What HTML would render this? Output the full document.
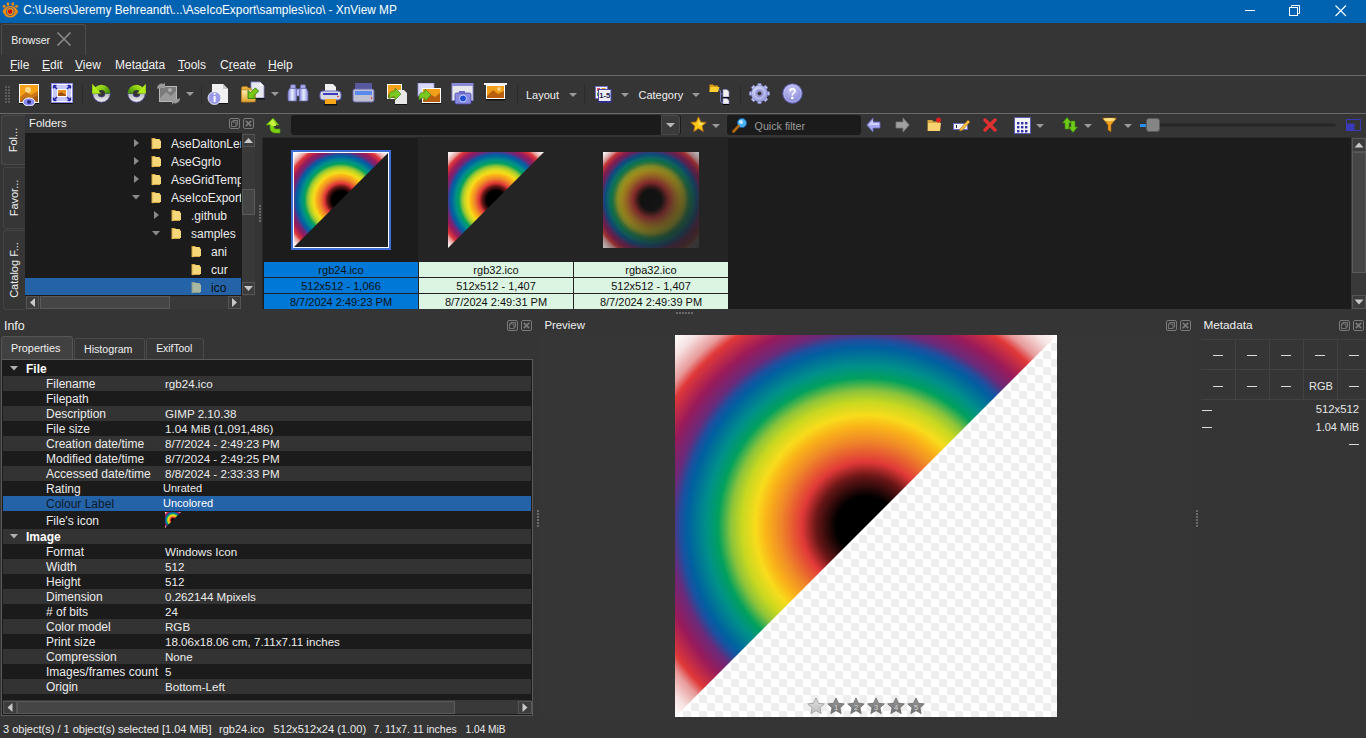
<!DOCTYPE html><html><head><meta charset="utf-8"><style>
html,body{margin:0;padding:0;}
body{width:1366px;height:738px;background:#353535;position:relative;overflow:hidden;font-family:"Liberation Sans",sans-serif;}
.a{position:absolute;}
.t{position:absolute;white-space:nowrap;}
</style></head><body>

<div class="a" style="left:0px;top:0px;width:1366px;height:23px;background:#0063b1;"></div>
<div class="t" style="left:23.2px;top:5.47px;font-size:11.85px;line-height:11.85px;color:#ffffff;">C:\Users\Jeremy Behreandt\...\AseIcoExport\samples\ico\ - XnView MP</div>
<svg class="a" style="left:2px;top:2px;" width="18" height="17" viewBox="0 0 18 17"><g fill="#f58a10"><ellipse cx="2.2" cy="4.3" rx="1.6" ry="1.4"/><ellipse cx="6" cy="2" rx="1.4" ry="1.8"/><ellipse cx="10.8" cy="2" rx="1.4" ry="1.8"/><ellipse cx="14.5" cy="4.3" rx="1.6" ry="1.4"/><path d="M0.5 9.5Q3 4 8.3 4Q13.6 4 16.2 9.5Q13.6 15.5 8.3 15.5Q3 15.5 0.5 9.5Z"/></g><circle cx="8.3" cy="9.5" r="4.3" fill="#1a5a9a"/><circle cx="8.3" cy="9.5" r="3.4" fill="#f59a18"/><circle cx="8.1" cy="9.6" r="2.3" fill="#c81408"/></svg>
<div class="a" style="left:1245px;top:10px;width:10px;height:1px;background:#ffffff;"></div>
<svg class="a" style="left:1289px;top:5px;" width="12" height="12" viewBox="0 0 12 12"><rect x="0.5" y="2.5" width="8" height="8" fill="none" stroke="#fff"/><path d="M2.5 2.5V0.5h8v8h-2" fill="none" stroke="#fff"/></svg>
<svg class="a" style="left:1335px;top:5px;" width="12" height="12" viewBox="0 0 12 12"><path d="M0.5 0.5L11 11M11 0.5L0.5 11" stroke="#fff" stroke-width="1.1"/></svg>
<div class="a" style="left:1px;top:24px;width:83px;height:30px;border:1px solid #4c4c4c;border-bottom:none;border-radius:3px 3px 0 0;background:#363636"></div>
<div class="t" style="left:11.3px;top:34.83px;font-size:10.6px;line-height:10.6px;color:#f0f0f0;">Browser</div>
<svg class="a" style="left:56px;top:31px;" width="16" height="16" viewBox="0 0 16 16"><path d="M1.5 1.5L14.5 14.5M14.5 1.5L1.5 14.5" stroke="#8a8a8a" stroke-width="1.6"/></svg>
<div class="t" style="left:10px;top:58.54px;font-size:12px;line-height:12px;color:#f0f0f0;text-decoration-color:#f0f0f0;"><u>F</u>ile</div>
<div class="t" style="left:42px;top:58.54px;font-size:12px;line-height:12px;color:#f0f0f0;text-decoration-color:#f0f0f0;"><u>E</u>dit</div>
<div class="t" style="left:75px;top:58.54px;font-size:12px;line-height:12px;color:#f0f0f0;text-decoration-color:#f0f0f0;"><u>V</u>iew</div>
<div class="t" style="left:115px;top:58.54px;font-size:12px;line-height:12px;color:#f0f0f0;text-decoration-color:#f0f0f0;">Meta<u>d</u>ata</div>
<div class="t" style="left:178px;top:58.54px;font-size:12px;line-height:12px;color:#f0f0f0;text-decoration-color:#f0f0f0;"><u>T</u>ools</div>
<div class="t" style="left:220px;top:58.54px;font-size:12px;line-height:12px;color:#f0f0f0;text-decoration-color:#f0f0f0;">C<u>r</u>eate</div>
<div class="t" style="left:268px;top:58.54px;font-size:12px;line-height:12px;color:#f0f0f0;text-decoration-color:#f0f0f0;"><u>H</u>elp</div>
<div class="a" style="left:0px;top:75px;width:1366px;height:1px;background:#6a6a6a;"></div>
<svg class="a" style="left:5px;top:86px;" width="6" height="18" viewBox="0 0 6 18"><rect x="0" y="0" width="2" height="2" fill="#5a5a5a"/><rect x="3" y="0" width="2" height="2" fill="#5a5a5a"/><rect x="0" y="3" width="2" height="2" fill="#5a5a5a"/><rect x="3" y="3" width="2" height="2" fill="#5a5a5a"/><rect x="0" y="6" width="2" height="2" fill="#5a5a5a"/><rect x="3" y="6" width="2" height="2" fill="#5a5a5a"/><rect x="0" y="9" width="2" height="2" fill="#5a5a5a"/><rect x="3" y="9" width="2" height="2" fill="#5a5a5a"/><rect x="0" y="12" width="2" height="2" fill="#5a5a5a"/><rect x="3" y="12" width="2" height="2" fill="#5a5a5a"/><rect x="0" y="15" width="2" height="2" fill="#5a5a5a"/><rect x="3" y="15" width="2" height="2" fill="#5a5a5a"/></svg>
<svg class="a" style="left:18px;top:83px;" width="22" height="23" viewBox="0 0 22 23"><rect x="1" y="1" width="20" height="19" fill="#fff"/><rect x="2" y="2" width="18" height="17" fill="#f5a21a"/><circle cx="10" cy="7" r="3" fill="#fcd88a"/><path d="M2 14L8 9L13 12L20 8V19H2Z" fill="#c8761a"/><path d="M2 19L7 14L12 17L20 12V19Z" fill="#a25a12"/><rect x="1" y="20" width="20" height="1" fill="#111"/><ellipse cx="11" cy="19" rx="6" ry="4" fill="#8c8cf0" stroke="#fff" stroke-width="1"/><circle cx="11" cy="19" r="2" fill="#2a2a80"/></svg>
<svg class="a" style="left:51px;top:83px;" width="22" height="21" viewBox="0 0 22 21"><rect x="0.5" y="0.5" width="21" height="19" fill="#fff" stroke="#8a8ae0"/><rect x="2" y="2" width="18" height="16" fill="#c8c8f8"/><rect x="6" y="6" width="10" height="8" fill="#fff"/><rect x="7" y="7" width="8" height="6" fill="#e89020"/><path d="M7 11L10 9L15 12V13H7Z" fill="#a05010"/><path d="M2.5 2.5L6 6M2.5 2.5H5.5M2.5 2.5V5.5M19.5 2.5L16 6M19.5 2.5H16.5M19.5 2.5V5.5M2.5 17.5L6 14M2.5 17.5H5.5M2.5 17.5V14.5M19.5 17.5L16 14M19.5 17.5H16.5M19.5 17.5V14.5" stroke="#2626a8" stroke-width="1.5" fill="none"/><rect x="0" y="20" width="22" height="1" fill="#111"/></svg>
<div class="a" style="left:82px;top:85px;width:1px;height:19px;background:#2b2b2b;"></div>
<svg class="a" style="left:91px;top:83px;" width="21" height="21" viewBox="0 0 21 21"><defs><linearGradient id="rl" x1="0" y1="0" x2="1" y2="0.6"><stop offset="0" stop-color="#c8f030"/><stop offset="0.55" stop-color="#8ad010"/><stop offset="1" stop-color="#4a9808"/></linearGradient><linearGradient id="rlb" x1="0" y1="0" x2="0" y2="1"><stop offset="0" stop-color="#b8b8b8"/><stop offset="1" stop-color="#f0f0f0"/></linearGradient></defs><path d="M1.7 10.5A8.8 8.8 0 0 0 19.3 10.5H14A3.5 3.5 0 0 1 7 10.5Z" fill="url(#rlb)" stroke="#40409a" stroke-width="0.8"/><path d="M1.7 10.5A8.8 8.8 0 0 1 19.3 10.5H14A3.5 3.5 0 0 0 7 10.5Z" fill="url(#rl)"/><path d="M1.2 0.8V10.5H10Z" fill="#b0ec18"/></svg>
<svg class="a" style="left:126px;top:83px;" width="21" height="21" viewBox="0 0 21 21"><g transform="translate(21,0) scale(-1,1)"><defs><linearGradient id="rr" x1="0" y1="0" x2="1" y2="0.6"><stop offset="0" stop-color="#c8f030"/><stop offset="0.55" stop-color="#8ad010"/><stop offset="1" stop-color="#4a9808"/></linearGradient><linearGradient id="rrb" x1="0" y1="0" x2="0" y2="1"><stop offset="0" stop-color="#b8b8b8"/><stop offset="1" stop-color="#f0f0f0"/></linearGradient></defs><path d="M1.7 10.5A8.8 8.8 0 0 0 19.3 10.5H14A3.5 3.5 0 0 1 7 10.5Z" fill="url(#rrb)" stroke="#40409a" stroke-width="0.8"/><path d="M1.7 10.5A8.8 8.8 0 0 1 19.3 10.5H14A3.5 3.5 0 0 0 7 10.5Z" fill="url(#rr)"/><path d="M1.2 0.8V10.5H10Z" fill="#b0ec18"/></g></svg>
<svg class="a" style="left:156px;top:82px;" width="25" height="23" viewBox="0 0 25 23"><rect x="3.5" y="4.5" width="17" height="15" fill="#7a7a7a" stroke="#b8b8b8"/><path d="M4 16L10 10L15 14L20 9V19H4Z" fill="#9a9a9a"/><circle cx="14" cy="8" r="2" fill="#aaa"/><path d="M1 7A5 5 0 0 1 8 2L9 0V6H3Z" fill="#9a9a9a"/><path d="M24 16A5 5 0 0 1 17 21L16 23V17H22Z" fill="#9a9a9a"/></svg>
<svg class="a" style="left:186px;top:92px;" width="8" height="4" viewBox="0 0 8 4"><path d="M0 0H8L4 4Z" fill="#9a9a9a"/></svg>
<div class="a" style="left:201px;top:85px;width:1px;height:19px;background:#2b2b2b;"></div>
<svg class="a" style="left:207px;top:83px;" width="22" height="22" viewBox="0 0 22 22"><path d="M5 1H16L21 6V20H5Z" fill="#f0f0f0"/><path d="M16 1V6H21Z" fill="#c8c8c8"/><rect x="5" y="20" width="16" height="1" fill="#111"/><circle cx="7.5" cy="15" r="6.5" fill="#9a9ae8" stroke="#fff" stroke-width="0.8"/><rect x="6.6" y="13" width="2" height="6" fill="#fff"/><circle cx="7.6" cy="10.8" r="1.1" fill="#fff"/></svg>
<svg class="a" style="left:240px;top:81px;" width="25" height="23" viewBox="0 0 25 23"><defs><linearGradient id="fd" x1="0" y1="0" x2="0" y2="1"><stop offset="0" stop-color="#fff0b0"/><stop offset="1" stop-color="#e0a030"/></linearGradient></defs><path d="M11 1H20L24 5V17H11Z" fill="#e6e8ee" stroke="#8888d8" stroke-width="0.8"/><path d="M20 1V5H24Z" fill="#fff"/><rect x="12" y="17" width="13" height="1.4" fill="#111"/><path d="M1.5 7Q1.5 5.5 3 5.5H7L8.5 7H11V21H1.5Z" fill="#e8b040" stroke="#b07818" stroke-width="0.6"/><path d="M2.5 9H15.5V19.5Q15.5 21 14 21H3Q1.5 21 1.5 19.5V10Q1.5 9 2.5 9Z" fill="url(#fd)" stroke="#b07818" stroke-width="0.6"/><path d="M8 9.5V17.5H16L13.6 15.1L18.6 10.1L15.4 6.9L10.4 11.9Z" fill="#78c818" stroke="#1e6e08" stroke-width="0.8"/></svg>
<svg class="a" style="left:271px;top:92px;" width="8" height="4" viewBox="0 0 8 4"><path d="M0 0H8L4 4Z" fill="#9a9a9a"/></svg>
<svg class="a" style="left:287px;top:84px;" width="22" height="18" viewBox="0 0 22 18"><defs><linearGradient id="bn" x1="0" y1="0" x2="1" y2="0"><stop offset="0" stop-color="#8888d8"/><stop offset="0.5" stop-color="#e6f0ff"/><stop offset="1" stop-color="#8888d8"/></linearGradient></defs><g stroke="#6a6ab8" stroke-width="0.7"><rect x="3.5" y="0.8" width="5" height="3.6" rx="1" fill="#a8a8e8"/><rect x="13.5" y="0.8" width="5" height="3.6" rx="1" fill="#a8a8e8"/><path d="M2.5 4.5H9.5V17H2Q1 17 1 15.5V8Z" fill="url(#bn)"/><path d="M12.5 4.5H19.5L21 8V15.5Q21 17 20 17H12.5Z" fill="url(#bn)"/><rect x="9.5" y="5" width="3" height="7" fill="#b8c0f0"/></g></svg>
<svg class="a" style="left:319px;top:83px;" width="23" height="23" viewBox="0 0 23 23"><path d="M6 1H14L17 4V9H6Z" fill="#f0f0f0"/><rect x="1" y="8" width="21" height="9" rx="3" fill="#d8d8e0" stroke="#6868c0" stroke-width="1"/><rect x="4" y="10" width="15" height="2" fill="#3c3cc0"/><circle cx="19" cy="13.5" r="0.8" fill="#e02020"/><rect x="6" y="16" width="11" height="5" fill="#f8a818"/><rect x="5" y="21" width="13" height="1.5" fill="#111"/></svg>
<svg class="a" style="left:352px;top:83px;" width="23" height="21" viewBox="0 0 23 21"><rect x="3" y="0" width="17" height="6" fill="#5858a0"/><rect x="1" y="6" width="21" height="13" rx="2" fill="#c0c0d0" stroke="#6868b0" stroke-width="1"/><rect x="3" y="8" width="17" height="4" fill="#5a8af0"/><circle cx="19.5" cy="15" r="0.8" fill="#e02020"/></svg>
<svg class="a" style="left:386px;top:83px;" width="23" height="22" viewBox="0 0 23 22"><rect x="1" y="1" width="15" height="15" fill="#fff"/><rect x="2" y="2" width="13" height="13" fill="#f5a21a"/><path d="M2 12L8 8L15 11V15H2Z" fill="#b86a12"/><path d="M9 7H18L21 10V21H9Z" fill="#e8e8e8"/><rect x="9" y="21" width="12" height="1" fill="#111"/><path d="M3 13Q3 8 9 8V5L15 11L9 17V14Q6 13 3 16Z" fill="#78c820" stroke="#3a7a10" stroke-width="0.6"/></svg>
<svg class="a" style="left:417px;top:83px;" width="25" height="21" viewBox="0 0 25 21"><rect x="1" y="0" width="16" height="13" fill="#d8d8f8" stroke="#9090e0" stroke-width="0.8"/><rect x="5" y="5" width="19" height="15" fill="#fff"/><rect x="6" y="6" width="17" height="13" fill="#f0a018"/><path d="M6 17L13 11L18 14L23 10V19H6Z" fill="#b86010"/><rect x="5" y="20" width="19" height="1" fill="#111"/><path d="M2 14Q2 9 8 9V6L14 12L8 18V15Q5 14 2 17Z" fill="#78c820" stroke="#3a7a10" stroke-width="0.6"/></svg>
<svg class="a" style="left:451px;top:83px;" width="23" height="23" viewBox="0 0 23 23"><rect x="1" y="0.5" width="21" height="17" fill="#e8e8ec" stroke="#8a8ad8" stroke-width="1"/><rect x="1" y="0" width="21" height="3" fill="#8a8ad8"/><rect x="4" y="10" width="16" height="11" rx="1.5" fill="#8a8ae0" stroke="#4848a8" stroke-width="0.8"/><rect x="8" y="8" width="6" height="3" fill="#6a6ac8"/><circle cx="12" cy="15.5" r="3.5" fill="#2050d0" stroke="#c8d0ff" stroke-width="1"/></svg>
<svg class="a" style="left:483px;top:83px;" width="25" height="19" viewBox="0 0 25 19"><rect x="1" y="0" width="23" height="2" fill="#f4f4f4"/><rect x="3" y="2" width="19" height="14" fill="#fff"/><rect x="4" y="3" width="17" height="12" fill="#f0a018"/><circle cx="16" cy="6" r="2" fill="#fcd080"/><path d="M4 13L10 7L15 11L21 8V15H4Z" fill="#b86010"/><rect x="3" y="16" width="19" height="1.5" fill="#111"/></svg>
<div class="a" style="left:517px;top:85px;width:1px;height:19px;background:#2b2b2b;"></div>
<div class="t" style="left:526px;top:89.89px;font-size:11px;line-height:11px;color:#f0f0f0;">Layout</div>
<svg class="a" style="left:569px;top:93px;" width="8" height="4" viewBox="0 0 8 4"><path d="M0 0H8L4 4Z" fill="#9a9a9a"/></svg>
<div class="a" style="left:584px;top:85px;width:1px;height:19px;background:#2b2b2b;"></div>
<svg class="a" style="left:594px;top:85px;" width="18" height="18" viewBox="0 0 18 18"><rect x="1.5" y="1.5" width="12" height="12" fill="#f4f4ff" stroke="#6a6ad0" stroke-width="0.8"/><rect x="3" y="3" width="3" height="3" fill="#e05050"/><rect x="7.5" y="3" width="4" height="1.8" fill="#f0a020"/><rect x="3" y="7.5" width="1.5" height="3.5" fill="#50a030"/><rect x="4.5" y="4.5" width="12.5" height="12.5" fill="#eeeef4" stroke="#4848b0" stroke-width="1"/><rect x="4" y="16" width="13.5" height="1.5" fill="#2a2a90"/><text x="10.8" y="13.1" font-size="7.6" font-family="Liberation Sans" font-weight="bold" text-anchor="middle" fill="#1a1a50">1-5</text></svg>
<svg class="a" style="left:621px;top:93px;" width="8" height="4" viewBox="0 0 8 4"><path d="M0 0H8L4 4Z" fill="#9a9a9a"/></svg>
<div class="t" style="left:638.5px;top:89.89px;font-size:11px;line-height:11px;color:#f0f0f0;">Category</div>
<svg class="a" style="left:692px;top:93px;" width="8" height="4" viewBox="0 0 8 4"><path d="M0 0H8L4 4Z" fill="#9a9a9a"/></svg>
<svg class="a" style="left:708px;top:82px;" width="23" height="23" viewBox="0 0 23 23"><path d="M1.5 2.5H5L6 3.5H10V10H1.5Z" fill="#d89a18"/><path d="M2.5 5H11.5L10 10H1.5Z" fill="#ffd030"/><path d="M10.5 7.5Q12.5 7.5 12.5 9.5V19Q12.5 20.5 14 20.5H15M12.5 11.5Q12.5 12 14 12H15" fill="none" stroke="#7a7ad0" stroke-width="0.9"/><path d="M15 7.5H19L21 9.5V15H15Z" fill="#f0f0f0" stroke="#8080d0" stroke-width="0.6"/><rect x="15" y="15" width="6" height="1.2" fill="#000"/><path d="M15 16.5H19L21 18.5V22H15Z" fill="#f0f0f0" stroke="#8080d0" stroke-width="0.6"/><rect x="15" y="22" width="6" height="1" fill="#000"/></svg>
<div class="a" style="left:740px;top:85px;width:1px;height:19px;background:#2b2b2b;"></div>
<svg class="a" style="left:749px;top:83px;" width="21" height="21" viewBox="0 0 21 21"><defs><radialGradient id="gg" cx="0.4" cy="0.35" r="0.7"><stop offset="0" stop-color="#e0e6ff"/><stop offset="1" stop-color="#9094d8"/></radialGradient></defs><rect x="8.7" y="0.4" width="3.6" height="4.5" rx="0.6" fill="#c4ccf4" stroke="#7a7ac8" stroke-width="0.6" transform="rotate(0 10.5 10.5)"/><rect x="8.7" y="0.4" width="3.6" height="4.5" rx="0.6" fill="#c4ccf4" stroke="#7a7ac8" stroke-width="0.6" transform="rotate(45 10.5 10.5)"/><rect x="8.7" y="0.4" width="3.6" height="4.5" rx="0.6" fill="#c4ccf4" stroke="#7a7ac8" stroke-width="0.6" transform="rotate(90 10.5 10.5)"/><rect x="8.7" y="0.4" width="3.6" height="4.5" rx="0.6" fill="#c4ccf4" stroke="#7a7ac8" stroke-width="0.6" transform="rotate(135 10.5 10.5)"/><rect x="8.7" y="0.4" width="3.6" height="4.5" rx="0.6" fill="#c4ccf4" stroke="#7a7ac8" stroke-width="0.6" transform="rotate(180 10.5 10.5)"/><rect x="8.7" y="0.4" width="3.6" height="4.5" rx="0.6" fill="#c4ccf4" stroke="#7a7ac8" stroke-width="0.6" transform="rotate(225 10.5 10.5)"/><rect x="8.7" y="0.4" width="3.6" height="4.5" rx="0.6" fill="#c4ccf4" stroke="#7a7ac8" stroke-width="0.6" transform="rotate(270 10.5 10.5)"/><rect x="8.7" y="0.4" width="3.6" height="4.5" rx="0.6" fill="#c4ccf4" stroke="#7a7ac8" stroke-width="0.6" transform="rotate(315 10.5 10.5)"/><circle cx="10.5" cy="10.5" r="8.2" fill="url(#gg)" stroke="#7a7ac8" stroke-width="0.6"/><circle cx="10.5" cy="10.5" r="4.8" fill="#9a9ad8" stroke="#c8ccf4" stroke-width="1"/><circle cx="10.5" cy="10.5" r="2" fill="#3a3a3a"/></svg>
<svg class="a" style="left:782px;top:83px;" width="21" height="21" viewBox="0 0 21 21"><defs><radialGradient id="hg" cx="0.45" cy="0.3" r="0.75"><stop offset="0" stop-color="#c8c8f8"/><stop offset="1" stop-color="#8080d0"/></radialGradient></defs><circle cx="10.5" cy="10.5" r="9.8" fill="url(#hg)" stroke="#5a5ab0" stroke-width="0.9"/><circle cx="10.5" cy="10.5" r="8.4" fill="none" stroke="#d8d8ff" stroke-width="0.6" opacity="0.7"/><path d="M7.3 8.2Q7.3 5 10.6 5Q13.8 5 13.8 8Q13.8 9.8 11.8 10.8Q11 11.3 11 12.6H9.6Q9.6 10.6 11 9.8Q12 9.2 12 8.1Q12 6.6 10.5 6.6Q9.1 6.6 9.1 8.2Z" fill="#fff"/><circle cx="10.3" cy="15" r="1.3" fill="#fff"/></svg>
<div class="a" style="left:0px;top:113px;width:1366px;height:1px;background:#6a6a6a;"></div>
<div class="a" style="left:1px;top:115px;width:23px;height:48px;border:1px solid #4a4a4a;border-right:none;border-radius:3px 0 0 3px;background:#3a3a3a"></div>
<div class="a" style="left:3px;top:167px;width:21px;height:60px;border:1px solid #444;border-right:none;border-radius:3px 0 0 3px;background:#363636"></div>
<div class="a" style="left:3px;top:230px;width:21px;height:78px;border:1px solid #444;border-right:none;border-radius:3px 0 0 3px;background:#363636"></div>
<div class="t" style="left:13px;top:140px;font-size:11px;line-height:11px;color:#f0f0f0;transform:translate(-50%,-50%) rotate(-90deg);">Fol...</div>
<div class="t" style="left:14px;top:197.5px;font-size:11px;line-height:11px;color:#f0f0f0;transform:translate(-50%,-50%) rotate(-90deg);">Favor...</div>
<div class="t" style="left:14px;top:269.5px;font-size:11px;line-height:11px;color:#f0f0f0;transform:translate(-50%,-50%) rotate(-90deg);">Catalog F...</div>
<div class="t" style="left:29px;top:118.03px;font-size:11.3px;line-height:11.3px;color:#f0f0f0;">Folders</div>
<svg class="a" style="left:229px;top:118px;" width="11" height="11" viewBox="0 0 11 11"><rect x="0.5" y="0.5" width="10" height="10" rx="1.5" fill="none" stroke="#7a7a7a"/><rect x="4" y="2.5" width="4.5" height="4.5" fill="none" stroke="#7a7a7a" stroke-width="0.9"/><rect x="2.5" y="4" width="4.5" height="4.5" fill="#353535" stroke="#7a7a7a" stroke-width="0.9"/></svg>
<svg class="a" style="left:243px;top:118px;" width="11" height="11" viewBox="0 0 11 11"><rect x="0.5" y="0.5" width="10" height="10" rx="1.5" fill="none" stroke="#7a7a7a"/><path d="M2.8 2.8L8.2 8.2M8.2 2.8L2.8 8.2" stroke="#7a7a7a" stroke-width="1.7"/></svg>
<div class="a" style="left:25px;top:133px;width:217px;height:163px;background:#1b1b1b;"></div>
<div class="a" style="left:25px;top:278px;width:216px;height:17px;background:#2563a8;"></div>
<svg class="a" style="left:134px;top:139px;" width="5" height="8" viewBox="0 0 5 8"><path d="M0 0L5 4L0 8Z" fill="#8a8a8a"/></svg>
<svg class="a" style="left:151px;top:137px;" width="11" height="13" viewBox="0 0 11 13"><path d="M0.5 1H4L5 2H9V12H0.5Z" fill="#d6a640"/><path d="M1.5 2H7.5L10 4V11H3L1.5 12.5Z" fill="#f5d77a"/></svg>
<div class="a" style="left:171px;top:135px;width:70px;height:16px;overflow:hidden;"><div class="t" style="left:0;top:2.84px;font-size:12px;line-height:12px;color:#ececec">AseDaltonLer</div></div>
<svg class="a" style="left:134px;top:157px;" width="5" height="8" viewBox="0 0 5 8"><path d="M0 0L5 4L0 8Z" fill="#8a8a8a"/></svg>
<svg class="a" style="left:151px;top:155px;" width="11" height="13" viewBox="0 0 11 13"><path d="M0.5 1H4L5 2H9V12H0.5Z" fill="#d6a640"/><path d="M1.5 2H7.5L10 4V11H3L1.5 12.5Z" fill="#f5d77a"/></svg>
<div class="a" style="left:171px;top:153px;width:70px;height:16px;overflow:hidden;"><div class="t" style="left:0;top:2.84px;font-size:12px;line-height:12px;color:#ececec">AseGgrlo</div></div>
<svg class="a" style="left:134px;top:175px;" width="5" height="8" viewBox="0 0 5 8"><path d="M0 0L5 4L0 8Z" fill="#8a8a8a"/></svg>
<svg class="a" style="left:151px;top:173px;" width="11" height="13" viewBox="0 0 11 13"><path d="M0.5 1H4L5 2H9V12H0.5Z" fill="#d6a640"/><path d="M1.5 2H7.5L10 4V11H3L1.5 12.5Z" fill="#f5d77a"/></svg>
<div class="a" style="left:171px;top:171px;width:70px;height:16px;overflow:hidden;"><div class="t" style="left:0;top:2.84px;font-size:12px;line-height:12px;color:#ececec">AseGridTemp</div></div>
<svg class="a" style="left:132px;top:195px;" width="8" height="5" viewBox="0 0 8 5"><path d="M0 0H8L4 4.5Z" fill="#8a8a8a"/></svg>
<svg class="a" style="left:151px;top:191px;" width="11" height="13" viewBox="0 0 11 13"><path d="M0.5 1H4L5 2H9V12H0.5Z" fill="#d6a640"/><path d="M1.5 2H7.5L10 4V11H3L1.5 12.5Z" fill="#f5d77a"/></svg>
<div class="a" style="left:171px;top:189px;width:70px;height:16px;overflow:hidden;"><div class="t" style="left:0;top:2.84px;font-size:12px;line-height:12px;color:#ececec">AseIcoExport</div></div>
<svg class="a" style="left:154px;top:211px;" width="5" height="8" viewBox="0 0 5 8"><path d="M0 0L5 4L0 8Z" fill="#8a8a8a"/></svg>
<svg class="a" style="left:171px;top:209px;" width="11" height="13" viewBox="0 0 11 13"><path d="M0.5 1H4L5 2H9V12H0.5Z" fill="#d6a640"/><path d="M1.5 2H7.5L10 4V11H3L1.5 12.5Z" fill="#f5d77a"/></svg>
<div class="a" style="left:191px;top:207px;width:50px;height:16px;overflow:hidden;"><div class="t" style="left:0;top:2.84px;font-size:12px;line-height:12px;color:#ececec">.github</div></div>
<svg class="a" style="left:152px;top:231px;" width="8" height="5" viewBox="0 0 8 5"><path d="M0 0H8L4 4.5Z" fill="#8a8a8a"/></svg>
<svg class="a" style="left:171px;top:227px;" width="11" height="13" viewBox="0 0 11 13"><path d="M0.5 1H4L5 2H9V12H0.5Z" fill="#d6a640"/><path d="M1.5 2H7.5L10 4V11H3L1.5 12.5Z" fill="#f5d77a"/></svg>
<div class="a" style="left:191px;top:225px;width:50px;height:16px;overflow:hidden;"><div class="t" style="left:0;top:2.84px;font-size:12px;line-height:12px;color:#ececec">samples</div></div>
<svg class="a" style="left:191px;top:245px;" width="11" height="13" viewBox="0 0 11 13"><path d="M0.5 1H4L5 2H9V12H0.5Z" fill="#d6a640"/><path d="M1.5 2H7.5L10 4V11H3L1.5 12.5Z" fill="#f5d77a"/></svg>
<div class="a" style="left:211px;top:243px;width:30px;height:16px;overflow:hidden;"><div class="t" style="left:0;top:2.84px;font-size:12px;line-height:12px;color:#ececec">ani</div></div>
<svg class="a" style="left:191px;top:263px;" width="11" height="13" viewBox="0 0 11 13"><path d="M0.5 1H4L5 2H9V12H0.5Z" fill="#d6a640"/><path d="M1.5 2H7.5L10 4V11H3L1.5 12.5Z" fill="#f5d77a"/></svg>
<div class="a" style="left:211px;top:261px;width:30px;height:16px;overflow:hidden;"><div class="t" style="left:0;top:2.84px;font-size:12px;line-height:12px;color:#ececec">cur</div></div>
<svg class="a" style="left:191px;top:281px;" width="11" height="13" viewBox="0 0 11 13"><path d="M0.5 1H4L5 2H9V12H0.5Z" fill="#8a9a88"/><path d="M1.5 2H7.5L10 4V11H3L1.5 12.5Z" fill="#a8b8a0"/></svg>
<div class="a" style="left:211px;top:279px;width:30px;height:16px;overflow:hidden;"><div class="t" style="left:0;top:2.84px;font-size:12px;line-height:12px;color:#0c0c0c">ico</div></div>
<div class="a" style="left:242px;top:133px;width:13px;height:163px;background:#393939;"></div>
<div class="a" style="left:242px;top:134px;width:11px;height:11px;border:1px solid #555;background:#3c3c3c"></div>
<svg class="a" style="left:244px;top:136px;" width="9" height="9" viewBox="0 0 9 9"><path d="M0.0 7.0H9.0L4.5 2.0Z" fill="#c8c8c8"/></svg>
<div class="a" style="left:242px;top:282px;width:11px;height:11px;border:1px solid #555;background:#3c3c3c"></div>
<svg class="a" style="left:244px;top:284px;" width="9" height="9" viewBox="0 0 9 9"><path d="M0.0 2.0H9.0L4.5 7.0Z" fill="#c8c8c8"/></svg>
<div class="a" style="left:242px;top:189px;width:11px;height:24px;border:1px solid #5a5a5a;background:#454545"></div>
<div class="a" style="left:25px;top:296px;width:217px;height:13px;background:#393939;"></div>
<div class="a" style="left:26px;top:296px;width:11px;height:11px;border:1px solid #555;background:#3c3c3c"></div>
<svg class="a" style="left:28px;top:298px;" width="9" height="9" viewBox="0 0 9 9"><path d="M7.0 0.0V9.0L2.0 4.5Z" fill="#c8c8c8"/></svg>
<div class="a" style="left:40px;top:296px;width:128px;height:11px;border:1px solid #5a5a5a;background:#454545"></div>
<div class="a" style="left:228px;top:296px;width:11px;height:11px;border:1px solid #555;background:#3c3c3c"></div>
<svg class="a" style="left:230px;top:298px;" width="9" height="9" viewBox="0 0 9 9"><path d="M2.0 0.0V9.0L7.0 4.5Z" fill="#c8c8c8"/></svg>
<div class="a" style="left:241px;top:296px;width:14px;height:13px;background:#353535;"></div>
<svg class="a" style="left:259px;top:205px;" width="2" height="18" viewBox="0 0 2 18"><rect x="0" y="0" width="2" height="2" fill="#6a6a6a"/><rect x="0" y="3" width="2" height="2" fill="#6a6a6a"/><rect x="0" y="6" width="2" height="2" fill="#6a6a6a"/><rect x="0" y="9" width="2" height="2" fill="#6a6a6a"/><rect x="0" y="12" width="2" height="2" fill="#6a6a6a"/><rect x="0" y="15" width="2" height="2" fill="#6a6a6a"/></svg>
<svg class="a" style="left:265px;top:117px;" width="18" height="17" viewBox="0 0 18 17"><path d="M8 1L1 8H5V11A5 5 0 0 0 10 16H15V12H11A2 2 0 0 1 9 10V8H14Z" fill="#80d010" stroke="#4a9a08" stroke-width="0.6"/><path d="M8 2L3 7H6V9H11V7Z" fill="#c8f040"/></svg>
<div class="a" style="left:291px;top:115px;width:390px;height:20px;background:#1b1b1b;border-radius:3px"></div>
<div class="a" style="left:661px;top:115px;width:19px;height:20px;background:#3a3a3a;border:1px solid #4a4a4a;box-sizing:border-box;border-radius:0 3px 3px 0"></div>
<svg class="a" style="left:666px;top:123px;" width="9" height="5" viewBox="0 0 9 5"><path d="M0 0H9L4.5 4.5Z" fill="#b8b8b8"/></svg>
<svg class="a" style="left:690px;top:116px;" width="17" height="17" viewBox="0 0 17 17"><path d="M8.5 0.8L10.8 5.9L16.2 6.4L12.1 10L13.3 15.5L8.5 12.6L3.7 15.5L4.9 10L0.8 6.4L6.2 5.9Z" fill="#ffc818" stroke="#c07010" stroke-width="0.8"/><path d="M8.5 3L10 6.8L13.8 7.2L11 9.6L8.5 8Z" fill="#fff4a0" opacity="0.6"/></svg>
<svg class="a" style="left:712px;top:124px;" width="8" height="4" viewBox="0 0 8 4"><path d="M0 0H8L4 4Z" fill="#9a9a9a"/></svg>
<div class="a" style="left:727px;top:115px;width:134px;height:20px;background:#1b1b1b;border-radius:3px"></div>
<svg class="a" style="left:732px;top:117px;" width="16" height="16" viewBox="0 0 16 16"><circle cx="10" cy="6" r="4.6" fill="#4ab0f0" stroke="#1a60a0" stroke-width="1"/><circle cx="9" cy="5" r="2" fill="#c0ecff"/><path d="M6.6 9.2L1.5 14.5" stroke="#b86a10" stroke-width="2.6" stroke-linecap="round"/></svg>
<div class="t" style="left:754.6px;top:120.54px;font-size:10.7px;line-height:10.7px;color:#9a9a9a;">Quick filter</div>
<svg class="a" style="left:866px;top:117px;" width="15" height="16" viewBox="0 0 15 16"><path d="M7 1L0.8 8L7 15V11H14V5H7Z" fill="#a8a8f0" stroke="#6a6ac0" stroke-width="0.8"/><path d="M7 3L2.5 8H13V6H7Z" fill="#d0d0ff"/></svg>
<svg class="a" style="left:895px;top:117px;" width="15" height="16" viewBox="0 0 15 16"><path d="M8 1L14.2 8L8 15V11H1V5H8Z" fill="#a0a0a0" stroke="#7a7a7a" stroke-width="0.8"/></svg>
<svg class="a" style="left:927px;top:117px;" width="15" height="15" viewBox="0 0 15 15"><path d="M0.5 3H5L6.5 4.5H13V14H0.5Z" fill="#d6a640"/><path d="M1 6H14L13 14H1Z" fill="#f8d270"/><circle cx="11.5" cy="3" r="2.5" fill="#e02020"/></svg>
<svg class="a" style="left:953px;top:118px;" width="18" height="14" viewBox="0 0 18 14"><rect x="0.5" y="5.5" width="14" height="6" fill="#f0f0f0" stroke="#6a6ac0"/><rect x="3" y="7" width="1" height="3" fill="#222"/><path d="M7 11L15 2L17 4L9 12.5L6.5 13Z" fill="#f8c040" stroke="#a06010" stroke-width="0.6"/></svg>
<svg class="a" style="left:983px;top:118px;" width="14" height="14" viewBox="0 0 14 14"><path d="M2 2L12 12M12 2L2 12" stroke="#e03030" stroke-width="3.4" stroke-linecap="round"/></svg>
<svg class="a" style="left:1014px;top:117px;" width="17" height="17" viewBox="0 0 17 17"><rect x="0.5" y="0.5" width="16" height="16" fill="#f4f4f4" stroke="#5a5ab0"/><rect x="3" y="5" width="2.4" height="2.4" fill="#3030a8"/><rect x="3" y="9" width="2.4" height="2.4" fill="#3030a8"/><rect x="3" y="13" width="2.4" height="2.4" fill="#3030a8"/><rect x="7" y="5" width="2.4" height="2.4" fill="#3030a8"/><rect x="7" y="9" width="2.4" height="2.4" fill="#3030a8"/><rect x="7" y="13" width="2.4" height="2.4" fill="#3030a8"/><rect x="11" y="5" width="2.4" height="2.4" fill="#3030a8"/><rect x="11" y="9" width="2.4" height="2.4" fill="#3030a8"/><rect x="11" y="13" width="2.4" height="2.4" fill="#3030a8"/></svg>
<svg class="a" style="left:1036px;top:124px;" width="8" height="4" viewBox="0 0 8 4"><path d="M0 0H8L4 4Z" fill="#9a9a9a"/></svg>
<svg class="a" style="left:1062px;top:117px;" width="16" height="16" viewBox="0 0 16 16"><path d="M5 0.5L0.5 6H3V12H7V6H9.5Z" fill="#70c818" stroke="#3a8a08" stroke-width="0.6"/><path d="M11 15.5L15.5 10H13V4H9V10H6.5Z" fill="#70c818" stroke="#3a8a08" stroke-width="0.6"/></svg>
<svg class="a" style="left:1084px;top:124px;" width="8" height="4" viewBox="0 0 8 4"><path d="M0 0H8L4 4Z" fill="#9a9a9a"/></svg>
<svg class="a" style="left:1102px;top:117px;" width="15" height="16" viewBox="0 0 15 16"><path d="M0.5 1H14.5L9 8V15L6 13V8Z" fill="#f0a020" stroke="#a05a08" stroke-width="0.7"/><ellipse cx="7.5" cy="2.5" rx="6" ry="1.6" fill="#ffe080"/></svg>
<svg class="a" style="left:1124px;top:124px;" width="8" height="4" viewBox="0 0 8 4"><path d="M0 0H8L4 4Z" fill="#9a9a9a"/></svg>
<div class="a" style="left:1140px;top:123px;width:196px;height:4px;background:#262626;border:1px solid #2e2e2e;box-sizing:border-box;border-radius:2px"></div>
<div class="a" style="left:1140px;top:124px;width:7px;height:3px;background:#2a90f0;"></div>
<div class="a" style="left:1146px;top:118px;width:14px;height:14px;background:#858585;border:1px solid #5a5a5a;box-sizing:border-box;border-radius:3px"></div>
<svg class="a" style="left:1346px;top:119px;" width="15" height="12" viewBox="0 0 15 12"><rect x="0.5" y="0.5" width="14" height="11" fill="none" stroke="#3a3ab8"/><rect x="0.5" y="4.5" width="8" height="7" fill="#3a3ab8"/></svg>
<div class="a" style="left:262px;top:137px;width:1089px;height:172px;background:#2a2a2a;"></div>
<div class="a" style="left:263px;top:138px;width:1088px;height:171px;background:#1c1c1c;"></div>
<div class="a" style="left:418px;top:137px;width:310px;height:172px;background:#242424;"></div>
<div class="a" style="left:291px;top:150px;width:100px;height:100px;background:#3d6fd6;"></div>
<div class="a" style="left:293px;top:152px;width:96px;height:96px;background:#ffffff;"></div>
<div class="a" style="left:294px;top:153px;width:94px;height:94px;background:#1e1e1e;"></div>
<div class="a" style="left:294px;top:153px;width:94px;height:94px;background:radial-gradient(circle farthest-corner at 50% 50%, #000 0%, #000 14%, #6a1616 20.5%, #e03838 25%, #f08a28 31.8%, #fab418 37%, #f8dc1c 41%, #c8d820 46%, #8cc43a 50%, #00a05e 54.8%, #00908a 59.3%, #0060a0 66%, #1c50a0 68.5%, #6a2a7a 72%, #9a1a5a 77.6%, #e03838 85%, #e89a9a 88.5%, #f6e0e0 94.4%, #ffffff 100%);clip-path:polygon(0 0,100% 0,0 100%)"></div>
<div class="a" style="left:448px;top:152px;width:96px;height:96px;background:radial-gradient(circle farthest-corner at 50% 50%, #000 0%, #000 14%, #6a1616 20.5%, #e03838 25%, #f08a28 31.8%, #fab418 37%, #f8dc1c 41%, #c8d820 46%, #8cc43a 50%, #00a05e 54.8%, #00908a 59.3%, #0060a0 66%, #1c50a0 68.5%, #6a2a7a 72%, #9a1a5a 77.6%, #e03838 85%, #e89a9a 88.5%, #f6e0e0 94.4%, #ffffff 100%);clip-path:polygon(0 0,100% 0,0 100%)"></div>
<div class="a" style="left:603px;top:152px;width:96px;height:96px;background:radial-gradient(circle farthest-corner at 50% 50%, #000 0%, #000 15%, #6a1616 21%, #d03030 26%, #e88a28 35%, #f0b418 40%, #e8d01c 45%, #b8cc28 50%, #50a848 54%, #00a05e 58%, #00908a 62%, #0060a0 67%, #1c50a0 69.5%, #6a2a7a 73%, #9a1a5a 78%, #e03838 85%, #e89a9a 88.5%, #f6e0e0 94.4%, #ffffff 100%)"></div>
<div class="a" style="left:603px;top:152px;width:96px;height:96px;background:radial-gradient(circle farthest-corner at 50% 50%, rgba(36,36,36,0.3) 0%, rgba(36,36,36,0.25) 60%, rgba(36,36,36,0) 100%)"></div>
<div class="a" style="left:603px;top:152px;width:96px;height:96px;background:linear-gradient(135deg, rgba(36,36,36,0) 0%, rgba(36,36,36,0.3) 50%, rgba(36,36,36,0.62) 75%, rgba(36,36,36,0.95) 100%)"></div>
<div class="a" style="left:264px;top:262px;width:154px;height:15px;background:#0078d7;"></div>
<div class="t" style="left:264px;top:264.69px;width:154px;text-align:center;font-size:11px;line-height:11px;color:#101010">rgb24.ico</div>
<div class="a" style="left:264px;top:278px;width:154px;height:15px;background:#0078d7;"></div>
<div class="t" style="left:264px;top:280.69px;width:154px;text-align:center;font-size:11px;line-height:11px;color:#101010">512x512 - 1,066</div>
<div class="a" style="left:264px;top:294px;width:154px;height:15px;background:#0078d7;"></div>
<div class="t" style="left:264px;top:296.69px;width:154px;text-align:center;font-size:11px;line-height:11px;color:#101010">8/7/2024 2:49:23 PM</div>
<div class="a" style="left:419px;top:262px;width:154px;height:15px;background:#dcf5e2;"></div>
<div class="t" style="left:419px;top:264.69px;width:154px;text-align:center;font-size:11px;line-height:11px;color:#101010">rgb32.ico</div>
<div class="a" style="left:419px;top:278px;width:154px;height:15px;background:#dcf5e2;"></div>
<div class="t" style="left:419px;top:280.69px;width:154px;text-align:center;font-size:11px;line-height:11px;color:#101010">512x512 - 1,407</div>
<div class="a" style="left:419px;top:294px;width:154px;height:15px;background:#dcf5e2;"></div>
<div class="t" style="left:419px;top:296.69px;width:154px;text-align:center;font-size:11px;line-height:11px;color:#101010">8/7/2024 2:49:31 PM</div>
<div class="a" style="left:574px;top:262px;width:154px;height:15px;background:#dcf5e2;"></div>
<div class="t" style="left:574px;top:264.69px;width:154px;text-align:center;font-size:11px;line-height:11px;color:#101010">rgba32.ico</div>
<div class="a" style="left:574px;top:278px;width:154px;height:15px;background:#dcf5e2;"></div>
<div class="t" style="left:574px;top:280.69px;width:154px;text-align:center;font-size:11px;line-height:11px;color:#101010">512x512 - 1,407</div>
<div class="a" style="left:574px;top:294px;width:154px;height:15px;background:#dcf5e2;"></div>
<div class="t" style="left:574px;top:296.69px;width:154px;text-align:center;font-size:11px;line-height:11px;color:#101010">8/7/2024 2:49:39 PM</div>
<div class="a" style="left:1351px;top:137px;width:15px;height:172px;background:#393939;"></div>
<div class="a" style="left:1352px;top:138px;width:12px;height:12px;border:1px solid #555;background:#3c3c3c"></div>
<svg class="a" style="left:1354px;top:140px;" width="10" height="10" viewBox="0 0 10 10"><path d="M0.5 7.5H9.5L5.0 2.5Z" fill="#c8c8c8"/></svg>
<div class="a" style="left:1352px;top:152px;width:12px;height:119px;border:1px solid #5a5a5a;background:#454545"></div>
<div class="a" style="left:1352px;top:295px;width:12px;height:12px;border:1px solid #555;background:#3c3c3c"></div>
<svg class="a" style="left:1354px;top:297px;" width="10" height="10" viewBox="0 0 10 10"><path d="M0.5 2.5H9.5L5.0 7.5Z" fill="#c8c8c8"/></svg>
<svg class="a" style="left:676px;top:312px;" width="18" height="2" viewBox="0 0 18 2"><rect x="0" y="0" width="2" height="2" fill="#6a6a6a"/><rect x="3" y="0" width="2" height="2" fill="#6a6a6a"/><rect x="6" y="0" width="2" height="2" fill="#6a6a6a"/><rect x="9" y="0" width="2" height="2" fill="#6a6a6a"/><rect x="12" y="0" width="2" height="2" fill="#6a6a6a"/><rect x="15" y="0" width="2" height="2" fill="#6a6a6a"/></svg>
<div class="t" style="left:4px;top:320.40px;font-size:12.4px;line-height:12.4px;color:#f0f0f0;">Info</div>
<svg class="a" style="left:507px;top:320px;" width="11" height="11" viewBox="0 0 11 11"><rect x="0.5" y="0.5" width="10" height="10" rx="1.5" fill="none" stroke="#7a7a7a"/><rect x="4" y="2.5" width="4.5" height="4.5" fill="none" stroke="#7a7a7a" stroke-width="0.9"/><rect x="2.5" y="4" width="4.5" height="4.5" fill="#353535" stroke="#7a7a7a" stroke-width="0.9"/></svg>
<svg class="a" style="left:521px;top:320px;" width="11" height="11" viewBox="0 0 11 11"><rect x="0.5" y="0.5" width="10" height="10" rx="1.5" fill="none" stroke="#7a7a7a"/><path d="M2.8 2.8L8.2 8.2M8.2 2.8L2.8 8.2" stroke="#7a7a7a" stroke-width="1.7"/></svg>
<div class="a" style="left:1px;top:336px;width:72px;height:24px;border:1px solid #555;border-bottom:none;border-radius:3px 3px 0 0;background:#414141;box-sizing:border-box"></div>
<div class="a" style="left:74px;top:338px;width:71px;height:22px;border:1px solid #4a4a4a;border-bottom:none;border-radius:3px 3px 0 0;background:#363636;box-sizing:border-box"></div>
<div class="a" style="left:146px;top:338px;width:58px;height:22px;border:1px solid #4a4a4a;border-bottom:none;border-radius:3px 3px 0 0;background:#363636;box-sizing:border-box"></div>
<div class="t" style="left:11px;top:343.02px;font-size:10.85px;line-height:10.85px;color:#f0f0f0;">Properties</div>
<div class="t" style="left:84px;top:344.18px;font-size:10.65px;line-height:10.65px;color:#f0f0f0;">Histogram</div>
<div class="t" style="left:156.2px;top:344.44px;font-size:10.35px;line-height:10.35px;color:#f0f0f0;">ExifTool</div>
<div class="a" style="left:1px;top:359px;width:532px;height:357px;border:1px solid #5a5a5a;box-sizing:border-box;background:#1b1b1b"></div>
<div class="a" style="left:3px;top:361px;width:528px;height:15px;background:#1b1b1b;"></div>
<svg class="a" style="left:10px;top:366px;" width="8" height="5" viewBox="0 0 8 5"><path d="M0 0H8L4 4.5Z" fill="#b0b0b0"/></svg>
<div class="t" style="left:26px;top:362.84px;font-size:12px;line-height:12px;color:#ffffff;font-weight:bold;">File</div>
<div class="a" style="left:3px;top:376px;width:528px;height:15px;background:#333333;"></div>
<div class="t" style="left:46px;top:377.84px;font-size:12px;line-height:12px;color:#ececec;">Filename</div>
<div class="t" style="left:165px;top:378.18px;font-size:11.6px;line-height:11.6px;color:#ececec;">rgb24.ico</div>
<div class="a" style="left:3px;top:391px;width:528px;height:15px;background:#1b1b1b;"></div>
<div class="t" style="left:46px;top:392.84px;font-size:12px;line-height:12px;color:#ececec;">Filepath</div>
<div class="a" style="left:3px;top:406px;width:528px;height:15px;background:#333333;"></div>
<div class="t" style="left:46px;top:407.84px;font-size:12px;line-height:12px;color:#ececec;">Description</div>
<div class="t" style="left:165px;top:408.18px;font-size:11.6px;line-height:11.6px;color:#ececec;">GIMP 2.10.38</div>
<div class="a" style="left:3px;top:421px;width:528px;height:15px;background:#1b1b1b;"></div>
<div class="t" style="left:46px;top:422.84px;font-size:12px;line-height:12px;color:#ececec;">File size</div>
<div class="t" style="left:165px;top:423.18px;font-size:11.6px;line-height:11.6px;color:#ececec;">1.04 MiB (1,091,486)</div>
<div class="a" style="left:3px;top:436px;width:528px;height:15px;background:#333333;"></div>
<div class="t" style="left:46px;top:437.84px;font-size:12px;line-height:12px;color:#ececec;">Creation date/time</div>
<div class="t" style="left:165px;top:438.18px;font-size:11.6px;line-height:11.6px;color:#ececec;">8/7/2024 - 2:49:23 PM</div>
<div class="a" style="left:3px;top:451px;width:528px;height:15px;background:#1b1b1b;"></div>
<div class="t" style="left:46px;top:452.84px;font-size:12px;line-height:12px;color:#ececec;">Modified date/time</div>
<div class="t" style="left:165px;top:453.18px;font-size:11.6px;line-height:11.6px;color:#ececec;">8/7/2024 - 2:49:25 PM</div>
<div class="a" style="left:3px;top:466px;width:528px;height:15px;background:#333333;"></div>
<div class="t" style="left:46px;top:467.84px;font-size:12px;line-height:12px;color:#ececec;">Accessed date/time</div>
<div class="t" style="left:165px;top:468.18px;font-size:11.6px;line-height:11.6px;color:#ececec;">8/8/2024 - 2:33:33 PM</div>
<div class="a" style="left:3px;top:481px;width:528px;height:15px;background:#1b1b1b;"></div>
<div class="t" style="left:46px;top:482.84px;font-size:12px;line-height:12px;color:#ececec;">Rating</div>
<div class="t" style="left:163px;top:482.99px;font-size:11px;line-height:11px;color:#ececec;">Unrated</div>
<div class="a" style="left:3px;top:496px;width:528px;height:15px;background:#2563a8;"></div>
<div class="t" style="left:46px;top:497.84px;font-size:12px;line-height:12px;color:#0e1a2a;">Colour Label</div>
<div class="t" style="left:163px;top:497.99px;font-size:11px;line-height:11px;color:#ffffff;">Uncolored</div>
<div class="a" style="left:3px;top:511px;width:528px;height:18px;background:#1b1b1b;"></div>
<div class="t" style="left:46px;top:514.84px;font-size:12px;line-height:12px;color:#ececec;">File's icon</div>
<div class="a" style="left:165px;top:512px;width:16px;height:16px;background:radial-gradient(circle farthest-corner at 50% 50%, #000 0%, #000 11%, #6a1616 18.5%, #e03838 23.7%, #f08a28 31.8%, #fab418 37%, #f8dc1c 41%, #c8d820 46%, #8cc43a 50%, #00a05e 54.8%, #00908a 59.3%, #0060a0 66%, #1c50a0 68.5%, #6a2a7a 72%, #9a1a5a 77.6%, #e03838 85%, #e89a9a 88.5%, #f6e0e0 94.4%, #ffffff 100%);clip-path:polygon(0 0,100% 0,0 100%)"></div>
<div class="a" style="left:3px;top:529px;width:528px;height:15px;background:#333333;"></div>
<svg class="a" style="left:10px;top:534px;" width="8" height="5" viewBox="0 0 8 5"><path d="M0 0H8L4 4.5Z" fill="#b0b0b0"/></svg>
<div class="t" style="left:26px;top:530.84px;font-size:12px;line-height:12px;color:#ffffff;font-weight:bold;">Image</div>
<div class="a" style="left:3px;top:544px;width:528px;height:15px;background:#1b1b1b;"></div>
<div class="t" style="left:46px;top:545.84px;font-size:12px;line-height:12px;color:#ececec;">Format</div>
<div class="t" style="left:165px;top:546.18px;font-size:11.6px;line-height:11.6px;color:#ececec;">Windows Icon</div>
<div class="a" style="left:3px;top:559px;width:528px;height:15px;background:#333333;"></div>
<div class="t" style="left:46px;top:560.84px;font-size:12px;line-height:12px;color:#ececec;">Width</div>
<div class="t" style="left:165px;top:561.18px;font-size:11.6px;line-height:11.6px;color:#ececec;">512</div>
<div class="a" style="left:3px;top:574px;width:528px;height:15px;background:#1b1b1b;"></div>
<div class="t" style="left:46px;top:575.84px;font-size:12px;line-height:12px;color:#ececec;">Height</div>
<div class="t" style="left:165px;top:576.18px;font-size:11.6px;line-height:11.6px;color:#ececec;">512</div>
<div class="a" style="left:3px;top:589px;width:528px;height:15px;background:#333333;"></div>
<div class="t" style="left:46px;top:590.84px;font-size:12px;line-height:12px;color:#ececec;">Dimension</div>
<div class="t" style="left:165px;top:591.18px;font-size:11.6px;line-height:11.6px;color:#ececec;">0.262144 Mpixels</div>
<div class="a" style="left:3px;top:604px;width:528px;height:15px;background:#1b1b1b;"></div>
<div class="t" style="left:46px;top:605.84px;font-size:12px;line-height:12px;color:#ececec;"># of bits</div>
<div class="t" style="left:165px;top:606.18px;font-size:11.6px;line-height:11.6px;color:#ececec;">24</div>
<div class="a" style="left:3px;top:619px;width:528px;height:15px;background:#333333;"></div>
<div class="t" style="left:46px;top:620.84px;font-size:12px;line-height:12px;color:#ececec;">Color model</div>
<div class="t" style="left:165px;top:621.18px;font-size:11.6px;line-height:11.6px;color:#ececec;">RGB</div>
<div class="a" style="left:3px;top:634px;width:528px;height:15px;background:#1b1b1b;"></div>
<div class="t" style="left:46px;top:635.84px;font-size:12px;line-height:12px;color:#ececec;">Print size</div>
<div class="t" style="left:165px;top:636.18px;font-size:11.6px;line-height:11.6px;color:#ececec;">18.06x18.06 cm, 7.11x7.11 inches</div>
<div class="a" style="left:3px;top:649px;width:528px;height:15px;background:#333333;"></div>
<div class="t" style="left:46px;top:650.84px;font-size:12px;line-height:12px;color:#ececec;">Compression</div>
<div class="t" style="left:165px;top:651.18px;font-size:11.6px;line-height:11.6px;color:#ececec;">None</div>
<div class="a" style="left:3px;top:664px;width:528px;height:15px;background:#1b1b1b;"></div>
<div class="t" style="left:46px;top:665.84px;font-size:12px;line-height:12px;color:#ececec;">Images/frames count</div>
<div class="t" style="left:165px;top:666.18px;font-size:11.6px;line-height:11.6px;color:#ececec;">5</div>
<div class="a" style="left:3px;top:679px;width:528px;height:15px;background:#333333;"></div>
<div class="t" style="left:46px;top:680.84px;font-size:12px;line-height:12px;color:#ececec;">Origin</div>
<div class="t" style="left:165px;top:681.18px;font-size:11.6px;line-height:11.6px;color:#ececec;">Bottom-Left</div>
<div class="a" style="left:3px;top:700px;width:528px;height:14px;background:#393939;"></div>
<div class="a" style="left:3px;top:701px;width:12px;height:11px;border:1px solid #555;background:#3c3c3c"></div>
<svg class="a" style="left:5px;top:703px;" width="10" height="9" viewBox="0 0 10 9"><path d="M7.5 0.0V9.0L2.5 4.5Z" fill="#c8c8c8"/></svg>
<div class="a" style="left:17px;top:701px;width:436px;height:11px;border:1px solid #5a5a5a;background:#454545"></div>
<div class="a" style="left:518px;top:701px;width:12px;height:11px;border:1px solid #555;background:#3c3c3c"></div>
<svg class="a" style="left:520px;top:703px;" width="10" height="9" viewBox="0 0 10 9"><path d="M2.5 0.0V9.0L7.5 4.5Z" fill="#c8c8c8"/></svg>
<svg class="a" style="left:537px;top:510px;" width="2" height="18" viewBox="0 0 2 18"><rect x="0" y="0" width="2" height="2" fill="#6a6a6a"/><rect x="0" y="3" width="2" height="2" fill="#6a6a6a"/><rect x="0" y="6" width="2" height="2" fill="#6a6a6a"/><rect x="0" y="9" width="2" height="2" fill="#6a6a6a"/><rect x="0" y="12" width="2" height="2" fill="#6a6a6a"/><rect x="0" y="15" width="2" height="2" fill="#6a6a6a"/></svg>
<div class="a" style="left:539px;top:335px;width:654px;height:383px;background:#363636;"></div>
<div class="t" style="left:544.4px;top:320.25px;font-size:11.4px;line-height:11.4px;color:#f0f0f0;">Preview</div>
<svg class="a" style="left:1166px;top:320px;" width="11" height="11" viewBox="0 0 11 11"><rect x="0.5" y="0.5" width="10" height="10" rx="1.5" fill="none" stroke="#7a7a7a"/><rect x="4" y="2.5" width="4.5" height="4.5" fill="none" stroke="#7a7a7a" stroke-width="0.9"/><rect x="2.5" y="4" width="4.5" height="4.5" fill="#353535" stroke="#7a7a7a" stroke-width="0.9"/></svg>
<svg class="a" style="left:1180px;top:320px;" width="11" height="11" viewBox="0 0 11 11"><rect x="0.5" y="0.5" width="10" height="10" rx="1.5" fill="none" stroke="#7a7a7a"/><path d="M2.8 2.8L8.2 8.2M8.2 2.8L2.8 8.2" stroke="#7a7a7a" stroke-width="1.7"/></svg>
<div class="a" style="left:675px;top:335px;width:382px;height:382px;background-color:#ffffff;background-image:linear-gradient(45deg,#eeeeee 25%,transparent 25%,transparent 75%,#eeeeee 75%),linear-gradient(45deg,#eeeeee 25%,transparent 25%,transparent 75%,#eeeeee 75%);background-size:16px 16px;background-position:8px 0,16px 8px"></div>
<div class="a" style="left:675px;top:335px;width:382px;height:382px;background:radial-gradient(circle farthest-corner at 50% 50%, #000 0%, #000 11%, #6a1616 18.5%, #e03838 23.7%, #f08a28 31.8%, #fab418 37%, #f8dc1c 41%, #c8d820 46%, #8cc43a 50%, #00a05e 54.8%, #00908a 59.3%, #0060a0 66%, #1c50a0 68.5%, #6a2a7a 72%, #9a1a5a 77.6%, #e03838 85%, #e89a9a 88.5%, #f6e0e0 94.4%, #ffffff 100%);clip-path:polygon(0 0,100% 0,0 100%)"></div>
<svg class="a" style="left:807px;top:697px;" width="18" height="19" viewBox="0 0 18 19"><defs><linearGradient id="st0" x1="0" y1="0" x2="0" y2="1"><stop offset="0" stop-color="#e0e0e0"/><stop offset="1" stop-color="#bdbdbd"/></linearGradient></defs><path d="M9 0.9L11.5 6.3L17.3 6.9L12.9 10.8L14.2 16.6L9 13.6L3.8 16.6L5.1 10.8L0.7 6.9L6.5 6.3Z" fill="url(#st0)" stroke="#a0a0a0" stroke-width="0.9" stroke-linejoin="round"/></svg>
<svg class="a" style="left:827px;top:697px;" width="18" height="19" viewBox="0 0 18 19"><defs><linearGradient id="st1" x1="0" y1="0" x2="0" y2="1"><stop offset="0" stop-color="#9a9a9a"/><stop offset="1" stop-color="#6e6e6e"/></linearGradient></defs><path d="M9 0.9L11.5 6.3L17.3 6.9L12.9 10.8L14.2 16.6L9 13.6L3.8 16.6L5.1 10.8L0.7 6.9L6.5 6.3Z" fill="url(#st1)" stroke="#707070" stroke-width="0.9" stroke-linejoin="round"/><text x="9.2" y="13.4" font-size="7.5" font-family="Liberation Sans" text-anchor="middle" fill="#e8e8e8" fill-opacity="0.85">1</text></svg>
<svg class="a" style="left:847px;top:697px;" width="18" height="19" viewBox="0 0 18 19"><defs><linearGradient id="st2" x1="0" y1="0" x2="0" y2="1"><stop offset="0" stop-color="#9a9a9a"/><stop offset="1" stop-color="#6e6e6e"/></linearGradient></defs><path d="M9 0.9L11.5 6.3L17.3 6.9L12.9 10.8L14.2 16.6L9 13.6L3.8 16.6L5.1 10.8L0.7 6.9L6.5 6.3Z" fill="url(#st2)" stroke="#707070" stroke-width="0.9" stroke-linejoin="round"/><text x="9.2" y="13.4" font-size="7.5" font-family="Liberation Sans" text-anchor="middle" fill="#e8e8e8" fill-opacity="0.85">2</text></svg>
<svg class="a" style="left:867px;top:697px;" width="18" height="19" viewBox="0 0 18 19"><defs><linearGradient id="st3" x1="0" y1="0" x2="0" y2="1"><stop offset="0" stop-color="#9a9a9a"/><stop offset="1" stop-color="#6e6e6e"/></linearGradient></defs><path d="M9 0.9L11.5 6.3L17.3 6.9L12.9 10.8L14.2 16.6L9 13.6L3.8 16.6L5.1 10.8L0.7 6.9L6.5 6.3Z" fill="url(#st3)" stroke="#707070" stroke-width="0.9" stroke-linejoin="round"/><text x="9.2" y="13.4" font-size="7.5" font-family="Liberation Sans" text-anchor="middle" fill="#e8e8e8" fill-opacity="0.85">3</text></svg>
<svg class="a" style="left:887px;top:697px;" width="18" height="19" viewBox="0 0 18 19"><defs><linearGradient id="st4" x1="0" y1="0" x2="0" y2="1"><stop offset="0" stop-color="#9a9a9a"/><stop offset="1" stop-color="#6e6e6e"/></linearGradient></defs><path d="M9 0.9L11.5 6.3L17.3 6.9L12.9 10.8L14.2 16.6L9 13.6L3.8 16.6L5.1 10.8L0.7 6.9L6.5 6.3Z" fill="url(#st4)" stroke="#707070" stroke-width="0.9" stroke-linejoin="round"/><text x="9.2" y="13.4" font-size="7.5" font-family="Liberation Sans" text-anchor="middle" fill="#e8e8e8" fill-opacity="0.85">4</text></svg>
<svg class="a" style="left:907px;top:697px;" width="18" height="19" viewBox="0 0 18 19"><defs><linearGradient id="st5" x1="0" y1="0" x2="0" y2="1"><stop offset="0" stop-color="#9a9a9a"/><stop offset="1" stop-color="#6e6e6e"/></linearGradient></defs><path d="M9 0.9L11.5 6.3L17.3 6.9L12.9 10.8L14.2 16.6L9 13.6L3.8 16.6L5.1 10.8L0.7 6.9L6.5 6.3Z" fill="url(#st5)" stroke="#707070" stroke-width="0.9" stroke-linejoin="round"/><text x="9.2" y="13.4" font-size="7.5" font-family="Liberation Sans" text-anchor="middle" fill="#e8e8e8" fill-opacity="0.85">5</text></svg>
<svg class="a" style="left:1196px;top:510px;" width="2" height="18" viewBox="0 0 2 18"><rect x="0" y="0" width="2" height="2" fill="#6a6a6a"/><rect x="0" y="3" width="2" height="2" fill="#6a6a6a"/><rect x="0" y="6" width="2" height="2" fill="#6a6a6a"/><rect x="0" y="9" width="2" height="2" fill="#6a6a6a"/><rect x="0" y="12" width="2" height="2" fill="#6a6a6a"/><rect x="0" y="15" width="2" height="2" fill="#6a6a6a"/></svg>
<div class="t" style="left:1203.4px;top:320.01px;font-size:11.8px;line-height:11.8px;color:#f0f0f0;">Metadata</div>
<svg class="a" style="left:1339px;top:320px;" width="11" height="11" viewBox="0 0 11 11"><rect x="0.5" y="0.5" width="10" height="10" rx="1.5" fill="none" stroke="#7a7a7a"/><rect x="4" y="2.5" width="4.5" height="4.5" fill="none" stroke="#7a7a7a" stroke-width="0.9"/><rect x="2.5" y="4" width="4.5" height="4.5" fill="#353535" stroke="#7a7a7a" stroke-width="0.9"/></svg>
<svg class="a" style="left:1353px;top:320px;" width="11" height="11" viewBox="0 0 11 11"><rect x="0.5" y="0.5" width="10" height="10" rx="1.5" fill="none" stroke="#7a7a7a"/><path d="M2.8 2.8L8.2 8.2M8.2 2.8L2.8 8.2" stroke="#7a7a7a" stroke-width="1.7"/></svg>
<div class="a" style="left:1201px;top:339px;width:165px;height:1px;background:#424242;"></div>
<div class="a" style="left:1201px;top:369px;width:165px;height:1px;background:#424242;"></div>
<div class="a" style="left:1201px;top:399px;width:165px;height:1px;background:#424242;"></div>
<div class="a" style="left:1235px;top:340px;width:1px;height:59px;background:#424242;"></div>
<div class="a" style="left:1269px;top:340px;width:1px;height:59px;background:#424242;"></div>
<div class="a" style="left:1303px;top:340px;width:1px;height:59px;background:#424242;"></div>
<div class="a" style="left:1337px;top:340px;width:1px;height:59px;background:#424242;"></div>
<div class="a" style="left:1213px;top:355px;width:10px;height:1px;background:#dcdcdc;"></div>
<div class="a" style="left:1247px;top:355px;width:10px;height:1px;background:#dcdcdc;"></div>
<div class="a" style="left:1281px;top:355px;width:10px;height:1px;background:#dcdcdc;"></div>
<div class="a" style="left:1315px;top:355px;width:10px;height:1px;background:#dcdcdc;"></div>
<div class="a" style="left:1349px;top:355px;width:10px;height:1px;background:#dcdcdc;"></div>
<div class="a" style="left:1213px;top:386px;width:10px;height:1px;background:#dcdcdc;"></div>
<div class="a" style="left:1247px;top:386px;width:10px;height:1px;background:#dcdcdc;"></div>
<div class="a" style="left:1281px;top:386px;width:10px;height:1px;background:#dcdcdc;"></div>
<div class="t" style="left:1309px;top:381.19px;font-size:11px;line-height:11px;color:#e6e6e6;">RGB</div>
<div class="a" style="left:1349px;top:386px;width:10px;height:1px;background:#dcdcdc;"></div>
<div class="a" style="left:1202px;top:410px;width:10px;height:1px;background:#dcdcdc;"></div>
<div class="t" style="left:1359px;top:404.43px;font-size:11.3px;line-height:11.3px;color:#e6e6e6;transform:translateX(-100%);">512x512</div>
<div class="a" style="left:1202px;top:427px;width:10px;height:1px;background:#dcdcdc;"></div>
<div class="t" style="left:1359px;top:421.69px;font-size:11px;line-height:11px;color:#e6e6e6;transform:translateX(-100%);">1.04 MiB</div>
<div class="a" style="left:1349px;top:444px;width:10px;height:1px;background:#dcdcdc;"></div>
<div class="t" style="left:3px;top:724.29px;font-size:11px;line-height:11px;color:#ececec;">3 object(s) / 1 object(s) selected [1.04 MiB]</div>
<div class="t" style="left:219px;top:724.29px;font-size:11px;line-height:11px;color:#ececec;">rgb24.ico</div>
<div class="t" style="left:273.6px;top:724.20px;font-size:11.1px;line-height:11.1px;color:#ececec;">512x512x24 (1.00)</div>
<div class="t" style="left:373.5px;top:724.75px;font-size:10.45px;line-height:10.45px;color:#ececec;">7. 11x7. 11 inches</div>
<div class="t" style="left:465.6px;top:725.05px;font-size:10.1px;line-height:10.1px;color:#ececec;">1.04 MiB</div>
</body></html>
